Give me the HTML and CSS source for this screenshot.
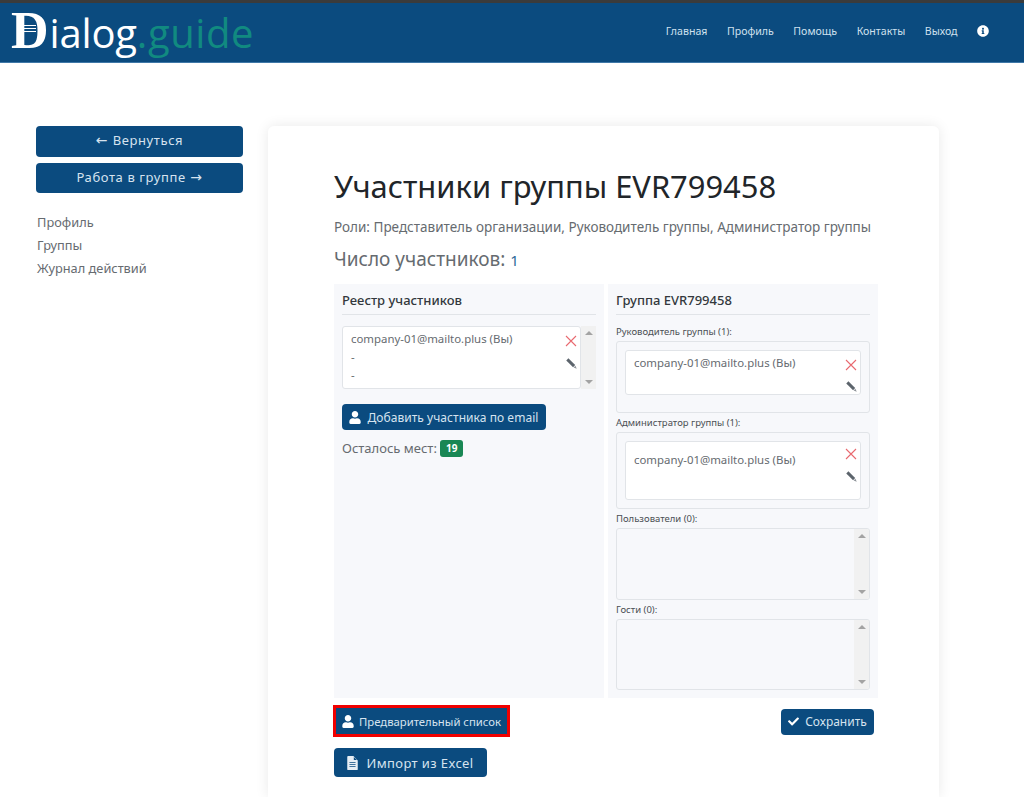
FILE: index.html
```html
<!DOCTYPE html>
<html lang="ru">
<head>
    <meta charset="UTF-8">
    <title>Dialog.guide</title>
    <link rel="stylesheet" href="styles.css">
</head>
<body>
    <svg class="icon-defs" xmlns="http://www.w3.org/2000/svg">
        <symbol id="i-user" viewBox="0 0 448 512"><path d="M224 256c70.7 0 128-57.3 128-128S294.7 0 224 0 96 57.3 96 128s57.3 128 128 128zm89.6 32h-16.7c-22.2 10.2-46.9 16-72.9 16s-50.6-5.8-72.9-16h-16.7C60.2 288 0 348.2 0 422.4V464c0 26.5 21.5 48 48 48h352c26.5 0 48-21.5 48-48v-41.6c0-74.2-60.2-134.4-134.4-134.4z"/></symbol>
        <symbol id="i-info" viewBox="0 0 512 512"><path d="M256 8C119 8 8 119.1 8 256c0 137 111 248 248 248s248-111 248-248C504 119.1 393 8 256 8zm0 110c23.2 0 42 18.8 42 42s-18.8 42-42 42-42-18.8-42-42 18.8-42 42-42zm56 254c0 6.6-5.4 12-12 12h-88c-6.6 0-12-5.4-12-12v-24c0-6.6 5.4-12 12-12h12v-64h-12c-6.6 0-12-5.4-12-12v-24c0-6.6 5.4-12 12-12h64c6.6 0 12 5.4 12 12v100h12c6.6 0 12 5.4 12 12v24z"/></symbol>
        <symbol id="i-check" viewBox="0 0 512 512"><path d="M173.898 439.404l-166.4-166.4c-9.997-9.997-9.997-26.206 0-36.204l36.203-36.204c9.997-9.998 26.207-9.998 36.204 0L192 312.69 432.095 72.596c9.997-9.997 26.207-9.997 36.204 0l36.203 36.204c9.997 9.997 9.997 26.206 0 36.204l-294.4 294.401c-9.998 9.997-26.207 9.997-36.204-.001z"/></symbol>
        <symbol id="i-file" viewBox="0 0 12 16"><path fill-rule="evenodd" d="M0 1a1 1 0 0 1 1-1h6l5 5v10a1 1 0 0 1-1 1H1a1 1 0 0 1-1-1zM7.5 1v3.5H11zM2.5 7v1h7V7zm0 2.3v1h7v-1zm0 2.3v1h7v-1z"/></symbol>
        <symbol id="i-pencil" viewBox="0 0 12 12"><path d="M0.3 2.6 2.6 0.3 10 7.7 7.7 10z"/><path d="M8.4 10.3 10.3 8.4 11.7 11.7z" opacity="0.7"/></symbol>
        <symbol id="i-cross" viewBox="0 0 12 12"><path d="M1 1 11 11M11 1 1 11" fill="none" stroke="currentColor" stroke-width="1.1"/></symbol>
    </svg>

    <header class="top-bar">
        <a class="logo" href="#">
            <span class="logo-d">D<span class="logo-lines"></span></span><span class="logo-white">ialog</span><span class="logo-teal">.guide</span>
        </a>
        <nav class="top-nav">
            <a href="#">Главная</a>
            <a href="#">Профиль</a>
            <a href="#">Помощь</a>
            <a href="#">Контакты</a>
            <a href="#">Выход</a>
            <svg class="nav-info"><use href="#i-info"/></svg>
        </nav>
    </header>

    <div class="page">
        <aside class="sidebar">
            <a class="btn btn-side" href="#"><span class="arrow">←</span> Вернуться</a>
            <a class="btn btn-side" href="#">Работа в группе <span class="arrow">→</span></a>
            <ul class="side-menu">
                <li>Профиль</li>
                <li>Группы</li>
                <li>Журнал действий</li>
            </ul>
        </aside>

        <main class="card">
            <h1>Участники группы EVR799458</h1>
            <p class="roles">Роли: Представитель организации, Руководитель группы, Администратор группы</p>
            <p class="count">Число участников: <span class="count-num">1</span></p>

            <div class="panels">
                <section class="panel">
                    <h2>Реестр участников</h2>
                    <div class="registry">
                        <div class="member member-registry">
                            <div class="member-text">
                                <div>company-01@mailto.plus (Вы)</div>
                                <div>-</div>
                                <div>-</div>
                            </div>
                            <div class="member-tools">
                                <svg class="ic-cross"><use href="#i-cross"/></svg>
                                <svg class="ic-pencil"><use href="#i-pencil"/></svg>
                            </div>
                        </div>
                        <div class="scroll"><span class="up"></span><span class="down"></span></div>
                    </div>
                    <a class="btn btn-add" href="#"><svg class="ic-user"><use href="#i-user"/></svg>Добавить участника по email</a>
                    <p class="seats">Осталось мест: <span class="badge">19</span></p>
                </section>

                <section class="panel">
                    <h2>Группа EVR799458</h2>

                    <div class="role-label">Руководитель группы (1):</div>
                    <div class="role-box role-lead">
                        <div class="member member-lead">
                            <div class="member-text">company-01@mailto.plus (Вы)</div>
                            <div class="member-tools">
                                <svg class="ic-cross"><use href="#i-cross"/></svg>
                                <svg class="ic-pencil"><use href="#i-pencil"/></svg>
                            </div>
                        </div>
                    </div>

                    <div class="role-label">Администратор группы (1):</div>
                    <div class="role-box role-admin">
                        <div class="member member-admin">
                            <div class="member-text">company-01@mailto.plus (Вы)</div>
                            <div class="member-tools">
                                <svg class="ic-cross"><use href="#i-cross"/></svg>
                                <svg class="ic-pencil"><use href="#i-pencil"/></svg>
                            </div>
                        </div>
                    </div>

                    <div class="role-label">Пользователи (0):</div>
                    <div class="role-box role-empty"><div class="scroll"><span class="up"></span><span class="down"></span></div></div>

                    <div class="role-label">Гости (0):</div>
                    <div class="role-box role-empty role-guests"><div class="scroll"><span class="up"></span><span class="down"></span></div></div>
                </section>
            </div>

            <div class="actions">
                <a class="btn btn-small btn-marked" href="#"><svg class="ic-user"><use href="#i-user"/></svg>Предварительный список</a>
                <a class="btn btn-save" href="#"><svg class="ic-check"><use href="#i-check"/></svg>Сохранить</a>
            </div>
            <a class="btn btn-import" href="#"><svg class="ic-file"><use href="#i-file"/></svg>Импорт из Excel</a>
        </main>
    </div>
</body>
</html>
```

FILE: styles.css
```css
:root {
    --navy: #0b4b7f;
    --text: #666b70;
    --dark: #212529;
    --panel-bg: #f7f8fb;
    --line: #e1e4e8;
}

html, body {
    margin: 0;
    padding: 0;
    height: 100%;
    overflow: hidden;
    background: #fff;
    font-family: "Noto Sans", "Open Sans", sans-serif;
    color: var(--text);
}

.icon-defs {
    display: none;
}

a {
    text-decoration: none;
}

/* Top bar */
.top-bar {
    box-sizing: border-box;
    height: 63px;
    background: var(--navy);
    border-top: 3px solid #3b3b3b;
    border-bottom: 1px solid #3f78a8;
    display: flex;
    justify-content: space-between;
    align-items: center;
    padding: 0 35px 0 11px;
}

.logo {
    display: flex;
    align-items: baseline;
    font-family: "Open Sans", sans-serif;
    font-size: 40px;
    line-height: 1;
    margin-top: -3px;
}

.logo-d {
    position: relative;
    font-family: "Liberation Serif", serif;
    font-weight: bold;
    font-size: 52px;
    color: #fff;
    margin-right: 1px;
}

.logo-lines {
    position: absolute;
    left: 13px;
    top: 20px;
    width: 12px;
    height: 9px;
    background: repeating-linear-gradient(#fff 0 1px, transparent 1px 3px);
}

.logo-white {
    color: #fff;
    letter-spacing: -0.2px;
}

.logo-teal {
    color: #118a80;
    letter-spacing: 0.6px;
}

.top-nav {
    display: flex;
    align-items: center;
    gap: 19.5px;
    font-size: 10.6px;
    padding-bottom: 4px;
}

.top-nav a {
    color: #cfe0ee;
}

.nav-info {
    width: 12px;
    height: 12px;
    fill: #fff;
}

/* Layout */
.page {
    display: flex;
    align-items: flex-start;
    padding: 63px 0 0 36px;
    gap: 25px;
}

.sidebar {
    width: 207px;
    flex: none;
}

.btn {
    display: inline-flex;
    align-items: center;
    justify-content: center;
    box-sizing: border-box;
    background: var(--navy);
    color: #d6e3ef;
    border-radius: 4px;
    font-size: 12px;
}

.btn-side {
    display: flex;
    gap: 0.35em;
    height: 31px;
    padding-bottom: 3px;
    margin-bottom: 6px;
    font-size: 13px;
    letter-spacing: 0.6px;
}

.btn-side + .btn-side {
    height: 30px;
}

.arrow {
    font-family: "DejaVu Sans", sans-serif;
    font-size: 14px;
}

.side-menu {
    list-style: none;
    margin: 18px 0 0 1px;
    padding: 0;
    font-size: 12.8px;
    line-height: 23px;
}

.card {
    box-sizing: border-box;
    width: 671px;
    height: 671px;
    background: #fff;
    border-radius: 6px 6px 0 0;
    box-shadow: 0 0 14px rgba(0, 0, 0, 0.09);
    padding: 37px 61px 0 66px;
}

h1 {
    margin: 0;
    font-size: 30.9px;
    font-weight: 400;
    line-height: 46px;
    color: var(--dark);
}

.roles {
    margin: 8px 0 0;
    font-size: 13.5px;
    line-height: 20px;
    white-space: nowrap;
}

.count {
    margin: 10px 0 0;
    font-size: 19px;
    line-height: 24px;
}

.count-num {
    font-size: 15px;
    color: #2d6a9a;
}

/* Panels */
.panels {
    display: grid;
    grid-template-columns: 270px 270px;
    gap: 4px;
    margin-top: 12px;
    height: 414px;
}

.panel {
    background: var(--panel-bg);
    padding: 0 8px;
}

h2 {
    margin: 0;
    height: 30px;
    border-bottom: 1px solid var(--line);
    font-size: 13px;
    font-weight: 500;
    line-height: 33px;
    color: #33383d;
}

/* Registry */
.registry {
    display: flex;
    height: 63px;
    margin: 11px 0 15px;
}

.member {
    flex: 1;
    box-sizing: border-box;
    display: flex;
    justify-content: space-between;
    background: #fff;
    border: 1px solid var(--line);
    border-radius: 3px;
    font-size: 11.4px;
}

.member-registry {
    padding: 3px 2px 0 8px;
    line-height: 18px;
}

.member-tools {
    display: flex;
    flex-direction: column;
    justify-content: space-between;
    align-items: center;
    width: 14px;
}

.ic-cross {
    width: 12px;
    height: 12px;
    color: #e8696f;
    margin-top: 5px;
}

.ic-pencil {
    width: 11px;
    height: 11px;
    fill: #5c646c;
}

.member-registry .member-tools {
    justify-content: flex-start;
    gap: 11px;
}

.scroll {
    position: relative;
    width: 15px;
    flex: none;
    background: #f1f1f1;
}

.up, .down {
    position: absolute;
    left: 4px;
    border-left: 4px solid transparent;
    border-right: 4px solid transparent;
}

.up {
    top: 5px;
    border-bottom: 4px solid #a3a3a3;
}

.down {
    bottom: 5px;
    border-top: 4px solid #a3a3a3;
}

.btn-add {
    height: 26px;
    width: 204px;
    font-size: 12px;
    letter-spacing: 0.05px;
}

.ic-user {
    width: 12px;
    height: 13px;
    fill: #fff;
    margin-right: 5px;
}

.btn-add .ic-user {
    margin-right: 6px;
}

.seats {
    margin: 9px 0 0;
    font-size: 13px;
    line-height: 18px;
}

.badge {
    display: inline-block;
    width: 23px;
    height: 17px;
    background: #198754;
    border-radius: 3px;
    color: #fff;
    font-size: 10px;
    font-weight: 700;
    line-height: 17px;
    text-align: center;
    vertical-align: 1px;
}

/* Group roles */
.role-label {
    font-size: 9.5px;
    line-height: 19px;
    color: #4a4f54;
}

.panel h2 + .role-label {
    margin-top: 7px;
}

.role-box {
    box-sizing: border-box;
    display: flex;
    justify-content: flex-end;
    border: 1px solid var(--line);
    border-radius: 3px;
    overflow: hidden;
}

.role-lead {
    height: 72px;
    padding: 8px 8px 0;
}

.role-admin {
    height: 77px;
    padding: 8px 8px 0;
}

.role-empty {
    height: 72px;
}

.role-guests {
    height: 71px;
}

.member-lead, .member-admin {
    padding: 3px 2px 3px 8px;
    line-height: 18px;
}

.member-lead {
    height: 45px;
}

.member-lead .ic-pencil {
    margin-bottom: -1px;
}

.member-admin {
    height: 59px;
    padding-top: 9px;
}

.member-admin .member-tools {
    justify-content: flex-start;
    gap: 11px;
    margin-top: -8px;
}

/* Bottom actions */
.actions {
    display: flex;
    justify-content: space-between;
    align-items: center;
    width: 540px;
    margin-top: 7px;
}

.btn-small {
    font-size: 11.3px;
}

.btn-marked {
    width: 177px;
    height: 32px;
    border: 3px solid #f00000;
    border-radius: 0;
    margin-left: -1px;
}

.btn-save {
    width: 93px;
    height: 26px;
    font-size: 12px;
    margin-top: 1px;
}

.ic-check {
    width: 11px;
    height: 11px;
    fill: #fff;
    margin-right: 6px;
}

.btn-import {
    width: 153px;
    height: 29px;
    margin-top: 11px;
    font-size: 13px;
    letter-spacing: 0.4px;
}

.ic-file {
    width: 11px;
    height: 14px;
    fill: #e7eef5;
    margin-right: 8px;
}
```
